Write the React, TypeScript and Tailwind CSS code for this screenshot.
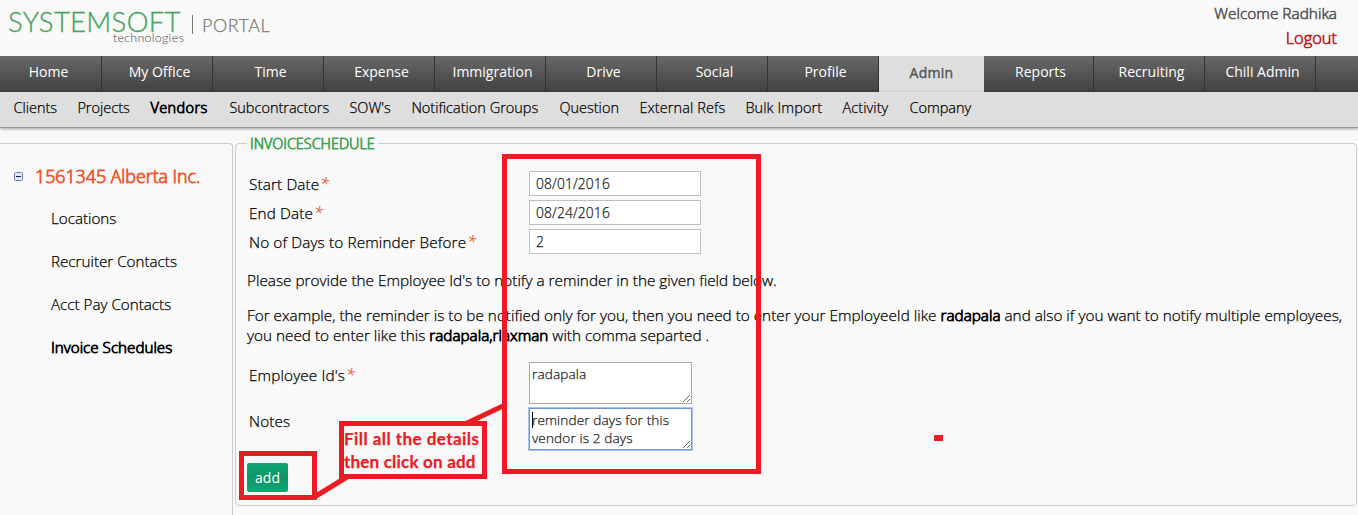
import type { ReactNode } from 'react';

const tabs = [
  { label: 'Home', cell: 'w-[102px] pr-[4px]' },
  { label: 'My Office', cell: 'w-[111px] pl-[5px]' },
  { label: 'Time', cell: 'w-[111px] pl-[5px]' },
  { label: 'Expense', cell: 'w-[111px] pl-[5px]' },
  { label: 'Immigration', cell: 'w-[111px] pl-[5px]' },
  { label: 'Drive', cell: 'w-[111px] pl-[5px]' },
  { label: 'Social', cell: 'w-[111px] pl-[5px]' },
  { label: 'Profile', cell: 'w-[111px] pl-[5px]' },
  { label: 'Admin', cell: 'w-[105px] tracking-[0.3px]', active: true },
  { label: 'Reports', cell: 'w-[110px] pl-[4px]' },
  { label: 'Recruiting', cell: 'w-[111px] pl-[5px]' },
  { label: 'Chili Admin', cell: 'w-[111px] pl-[5px]' },
];

const subTabs = [
  { label: 'Clients', cell: 'w-[64px]' },
  { label: 'Projects', cell: 'w-[73px]' },
  { label: 'Vendors', cell: 'w-[79px] tracking-[0.4px]', active: true },
  { label: 'Subcontractors', cell: 'w-[120px]' },
  { label: "SOW's", cell: 'w-[62px]' },
  { label: 'Notification Groups', cell: 'w-[148px]' },
  { label: 'Question', cell: 'w-[80px]' },
  { label: 'External Refs', cell: 'w-[106px] tracking-[0.1px]' },
  { label: 'Bulk Import', cell: 'w-[97px] tracking-[0.1px]' },
  { label: 'Activity', cell: 'w-[67px] tracking-[0.1px]' },
  { label: 'Company', cell: 'w-[70px]' },
];

function Strong({ children }: { children: ReactNode }) {
  return <b className="font-light [-webkit-text-stroke:0.8px_currentColor]">{children}</b>;
}

function Required() {
  return <span className="ml-px text-[16px] italic leading-none text-[#e8622a]">*</span>;
}

function Field({ label, value }: { label: string; value: string }) {
  return (
    <div className="flex h-[25px] items-center">
      <label className="w-[280px] shrink-0 pt-[2px] tracking-[0.13px]">
        {label}
        <Required />
      </label>
      <input
        className="h-[25px] w-[172px] border border-[#bfbfbf] bg-white px-[6px] text-[13.8px] tracking-[0.15px] text-[#222] outline-none"
        defaultValue={value}
      />
    </div>
  );
}

function Header() {
  return (
    <header className="flex h-14 shrink-0 justify-between">
      <div className="flex pl-[8px]">
        <div className="w-[177px] whitespace-nowrap">
          <div className="h-[32px] pt-[6px] font-['Lato'] text-[27.5px] leading-[32px] tracking-[0.3px] text-[#43a457] [-webkit-text-stroke:0.3px_currentColor]">
            SYSTEMSOFT
          </div>
          <div className="pr-px text-right font-['Lato'] text-[12.5px] leading-[11px] tracking-[0.25px] text-[#666] [-webkit-text-stroke:0.1px_currentColor]">
            technologies
          </div>
        </div>
        <div className="ml-[7px] mt-[15px] h-[19px] w-px bg-[#777]" />
        <div className="ml-[9px] mt-[14px] font-['Lato'] text-[18px] leading-[22px] tracking-[0.5px] text-[#777]">
          PORTAL
        </div>
      </div>
      <div className="pr-[21px] pt-[2px] text-right text-[15.4px] leading-[24px] [-webkit-text-stroke:0.6px_currentColor]">
        <div className="text-[#555]">Welcome Radhika</div>
        <div className="text-[16.4px] text-[#cc0c14]">Logout</div>
      </div>
    </header>
  );
}

export default function App() {
  return (
    <div className="relative flex h-[515px] w-[1358px] flex-col overflow-hidden bg-[#f9f9f9] font-['Open_Sans',sans-serif] text-[15.31px] font-light text-black [-webkit-text-stroke:0.25px_currentColor]">
      <Header />
      <nav className="flex h-9 shrink-0 bg-linear-to-b from-[#696969] to-[#414141]">
        {tabs.map((t) => (
          <a
            key={t.label}
            className={`${t.cell} h-9 shrink-0 text-center text-[14px] font-normal ${
              t.active
                ? 'bg-[#dedede] leading-[34px] text-[#555] [-webkit-text-stroke:0.4px_currentColor]'
                : 'border-r border-[#333] leading-[32px] text-white [-webkit-text-stroke:0px]'
            }`}
          >
            {t.label}
          </a>
        ))}
      </nav>
      <nav className="z-10 flex h-[36px] shrink-0 border-b border-[#999] bg-[#dedede] pl-[13.4px] text-[14.5px] leading-[31px] shadow-[0_1px_3px_rgba(0,0,0,0.35)]">
        {subTabs.map((t) => (
          <a key={t.label} className={`${t.cell} shrink-0 whitespace-nowrap`}>
            {t.active ? <Strong>{t.label}</Strong> : t.label}
          </a>
        ))}
      </nav>
      <div className="flex flex-1 items-start gap-[2px] pt-[15px]">
        <aside className="h-[400px] w-[233px] shrink-0 rounded-tr-[4px] border-r border-t border-[#ccc]">
          <div className="flex items-center pl-[14px] pt-[20px] text-[17.8px] leading-[24px] text-[#f0562b]">
            <svg className="mr-[12px]" width="9" height="9" viewBox="0 0 9 9">
              <rect x="0.5" y="0.5" width="8" height="8" rx="1" fill="#e4e8f4" stroke="#6f7fb8" />
              <path d="M2 4.5h5" stroke="#15157a" />
            </svg>
            <Strong>1561345 Alberta Inc.</Strong>
          </div>
          <ul className="pl-[51px] pt-[9px] text-[15.2px] leading-[43px]">
            <li>Locations</li>
            <li>Recruiter Contacts</li>
            <li>Acct Pay Contacts</li>
            <li>
              <Strong>Invoice Schedules</Strong>
            </li>
          </ul>
        </aside>
        <main className="h-[363px] w-[1122px] shrink-0 rounded-[4px] border border-[#ccc] pl-[11px]">
          <div className="-mt-[11px] flex h-[22px]">
            <h2 className="bg-[#f9f9f9] px-[3px] text-[14.4px] leading-[22px] text-[#43a457]">
              <Strong>INVOICESCHEDULE</Strong>
            </h2>
          </div>
          <div className="mt-[16px] flex flex-col gap-1 pl-[2px]">
            <Field label="Start Date" value="08/01/2016" />
            <Field label="End Date" value="08/24/2016" />
            <Field label="No of Days to Reminder Before" value="2" />
          </div>
          <p className="mt-[16px] whitespace-nowrap leading-[20px]">
            Please provide the Employee Id's to notify a reminder in the given field below.
          </p>
          <p className="mt-[15px] whitespace-nowrap leading-[20px]">
            For example, the reminder is to be notified only for you, then you need to enter your EmployeeId like{' '}
            <Strong>radapala</Strong> and also if you want to notify multiple employees,
            <br />
            you need to enter like this <Strong>radapala,rlaxman</Strong> with comma separted .
          </p>
          <div className="mt-[17px] flex flex-col gap-1 pl-[2px]">
            <div className="flex h-[42px]">
              <label className="w-[280px] pt-[2px] tracking-[0.13px]">
                Employee Id's
                <Required />
              </label>
              <textarea
                className="h-[42px] w-[163px] resize border border-[#a9a9a9] bg-white px-[2px] pt-[2px] text-[13.6px] leading-[18px] tracking-[0.12px] text-[#222] outline-none"
                defaultValue="radapala"
              />
            </div>
            <div className="flex h-[42px]">
              <label className="w-[280px] pt-[2px] tracking-[0.13px]">Notes</label>
              <div className="relative h-[42px]">
                <textarea
                  className="h-[42px] w-[163px] resize overflow-hidden border border-[#7096d8] bg-white px-[2px] pt-[2px] text-[13.6px] leading-[18px] tracking-[0.12px] text-[#222] shadow-[0_0_0_1px_#a9c3f0] outline-none"
                  defaultValue={'reminder days for this\nvendor is 2 days'}
                />
                <span className="absolute left-[3px] top-[4px] h-[16px] w-px bg-black" />
              </div>
            </div>
          </div>
          <button className="mt-[13px] h-[29px] w-[41px] rounded-[2px] bg-linear-to-b from-[#10a874] via-[#0e9567] to-[#10a874] text-[14px] font-normal text-white [-webkit-text-stroke:0px]">
            add
          </button>
        </main>
      </div>

      <div className="absolute left-[502px] top-[154px] z-20 h-[320px] w-[259px] border-[5px] border-[#ed1c24]" />
      <div className="absolute left-[239px] top-[451px] z-20 h-[49px] w-[78px] border-[5px] border-[#ed1c24]" />
      <svg className="absolute left-0 top-0 z-20" width="1358" height="515" viewBox="0 0 1358 515">
        <path d="M316 496L347 477M465 424L505 405" stroke="#ed1c24" strokeWidth="5" fill="none" />
      </svg>
      <div className="absolute left-[339px] top-[421px] z-20 h-[58px] w-[148px] whitespace-nowrap border-[5px] border-[#ed1c24] bg-[#f9f9f9] pt-[1px] font-['Lato'] text-[17px] font-bold leading-[23px] text-[#ed1c24]">
        <div className="tracking-[0.45px]">Fill all the details</div>
        <div className="tracking-[0.2px]">then click on add</div>
      </div>
      <div className="absolute left-[934px] top-[435px] z-20 h-[6px] w-[9px] bg-[#ed1c24]" />
    </div>
  );
}
